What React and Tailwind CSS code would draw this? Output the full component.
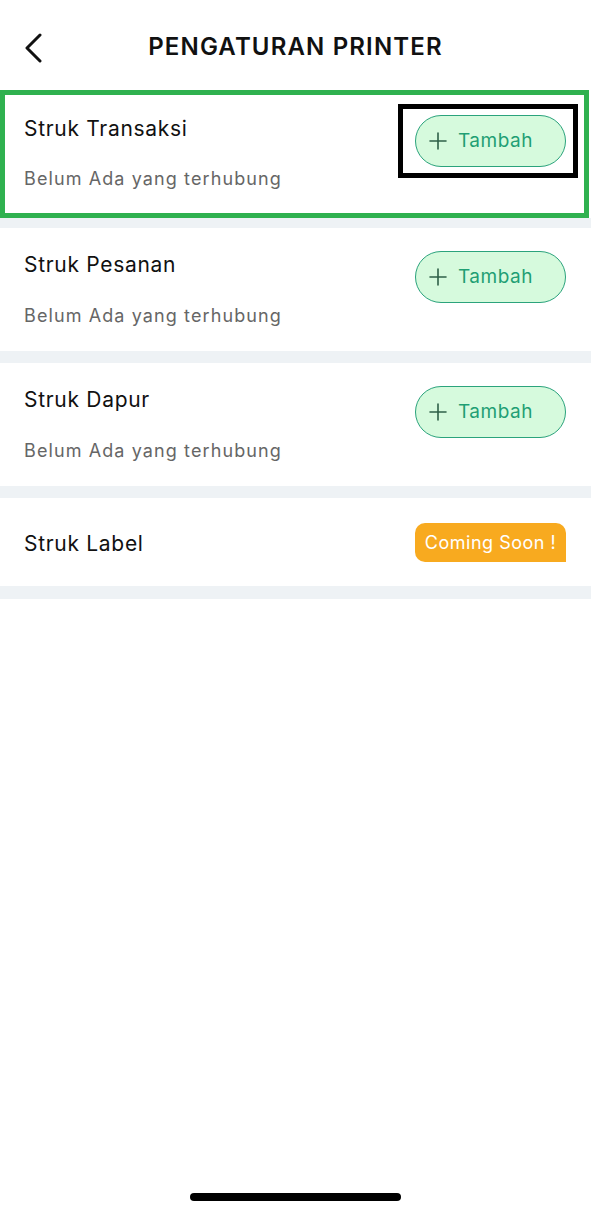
import React from 'react';

const font = { fontFamily: 'Inter, "Noto Sans", sans-serif' };

const PlusIcon = () => (
  <svg width="20" height="20" viewBox="0 0 20 20" fill="none" stroke="#2f6048" strokeWidth="1.6" strokeLinecap="round">
    <path d="M10 2v16M2 10h16" />
  </svg>
);

const AddButton = () => (
  <button className="flex h-[52px] w-[151px] items-center rounded-full border-[1.5px] border-[#2ba37c] bg-[#d6fadd] pl-[12px] text-[19px] tracking-[0.5px] text-[#1f9f74]">
    <PlusIcon />
    <span className="ml-[10px]">Tambah</span>
  </button>
);

const Separator = ({ h = 'h-[12px]' }) => <div className={`${h} bg-[#eef2f5]`} />;

const PrinterRow = ({ title }) => (
  <div className="flex items-start justify-between bg-white pl-6 pr-[25px] pt-[23px] pb-[23px]">
    <div>
      <div className="text-[21px] leading-7 tracking-[0.7px] text-[#111]">{title}</div>
      <div className="mt-[25px] text-[18px] leading-6 tracking-[1.1px] text-[#666]">Belum Ada yang terhubung</div>
    </div>
    <AddButton />
  </div>
);

export default function App() {
  return (
    <div className="relative min-h-[1214px] w-[591px] bg-white" style={font}>
      {/* Header */}
      <div className="relative flex h-[90px] items-center justify-center pt-[4px]">
        <svg className="absolute left-[22px] top-[33px]" width="22" height="30" viewBox="0 0 22 30" fill="none" stroke="#111" strokeWidth="3" strokeLinecap="round" strokeLinejoin="round">
          <path d="M18 2L5 15l13 13" />
        </svg>
        <h1 className="text-[24px] font-semibold tracking-[1.15px] text-[#111]">PENGATURAN PRINTER</h1>
      </div>

      {/* Struk Transaksi (highlighted) */}
      <div className="mr-[2px] flex h-[128px] items-start justify-between border-[5px] border-[#2fb14f] bg-white pl-[19px] pr-[6px] pt-[9px]">
        <div className="pt-[11px]">
          <div className="text-[21px] leading-7 tracking-[0.7px] text-[#111]">Struk Transaksi</div>
          <div className="mt-[24px] text-[18px] leading-6 tracking-[1.1px] text-[#666]">Belum Ada yang terhubung</div>
        </div>
        <div className="border-[5px] border-black pb-[6px] pl-[12px] pr-[7px] pt-[6px]">
          <AddButton />
        </div>
      </div>
      <Separator h="h-[10px]" />

      <PrinterRow title="Struk Pesanan" />
      <Separator />
      <PrinterRow title="Struk Dapur" />
      <Separator />

      <div className="flex h-[88px] items-center justify-between bg-white pl-6 pr-[25px]">
        <div className="pt-[4px] text-[21px] leading-7 tracking-[0.7px] text-[#111]">Struk Label</div>
        <div className="flex h-[39px] w-[151px] items-center justify-center rounded-t-[10px] rounded-bl-[10px] bg-[#f8aa1f] text-[18px] tracking-[0.5px] text-white">
          Coming Soon !
        </div>
      </div>
      <Separator h="h-[13px]" />

      {/* Home indicator */}
      <div className="absolute bottom-[13px] left-[190px] h-[8px] w-[211px] rounded-full bg-black" />
    </div>
  );
}
